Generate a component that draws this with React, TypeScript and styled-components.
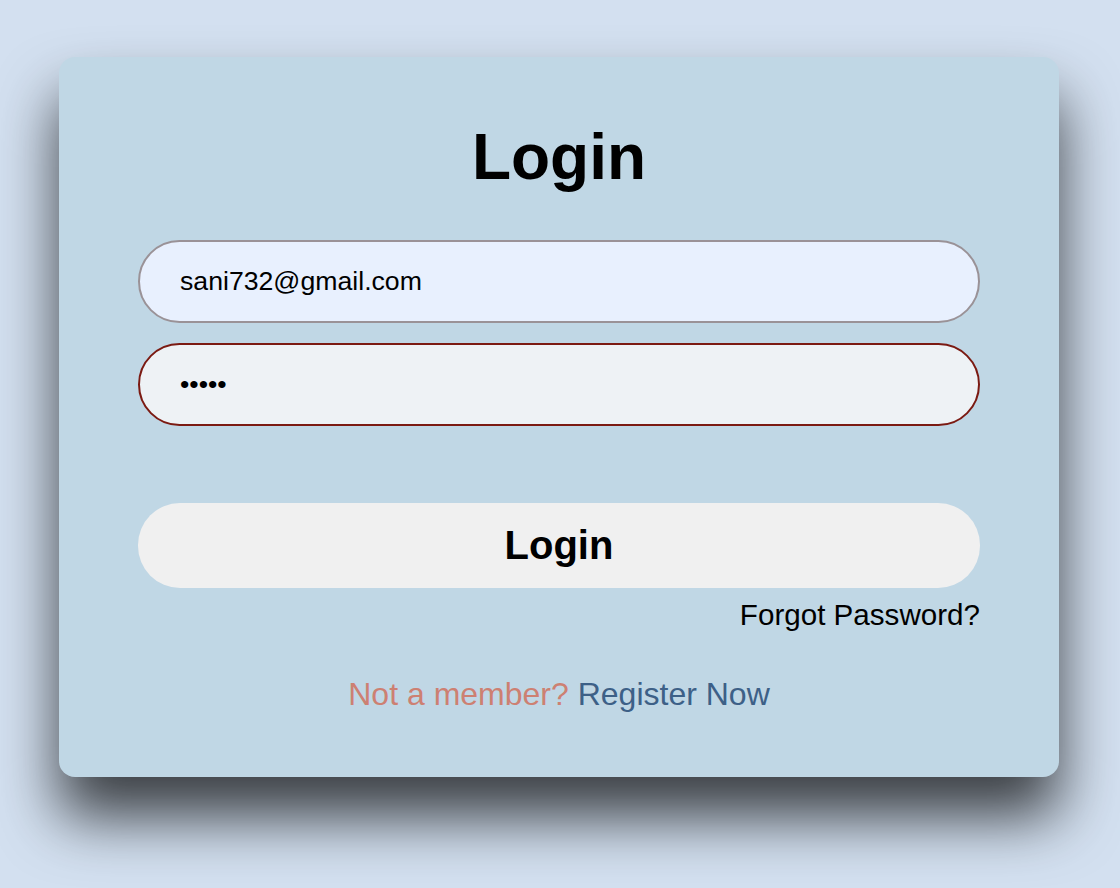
import React from "react";
import styled, { createGlobalStyle } from "styled-components";

const Global = createGlobalStyle`
  html, body { margin: 0; padding: 0; }
  body {
    background: #d3e0f0;
    font-family: "Liberation Sans", Arial, sans-serif;
    width: 1120px;
    height: 888px;
    overflow: hidden;
  }
`;

const Page = styled.div`
  display: flex;
  justify-content: flex-start;
  padding: 57px 0 0 59px;
`;

const Card = styled.form`
  width: 1000px;
  height: 720px;
  box-sizing: border-box;
  background: #c0d7e5;
  border-radius: 16px;
  box-shadow: 0 40px 60px rgba(0, 0, 0, 0.72);
  padding: 63px 79px 0;
  display: flex;
  flex-direction: column;
`;

const Title = styled.h1`
  margin: 0 0 46px;
  text-align: center;
  font-size: 64px;
  font-weight: 700;
  color: #000;
  line-height: normal;
`;

const Field = styled.input<{ $variant: "filled" | "error" }>`
  display: block;
  width: 100%;
  height: 83px;
  box-sizing: border-box;
  border-radius: 42px;
  border: 2px solid ${(p) => (p.$variant === "error" ? "#7b1a12" : "#9a9297")};
  background: ${(p) => (p.$variant === "error" ? "#eef2f5" : "#e8f0fe")};
  padding: 0 40px;
  font-family: "Liberation Sans", Arial, sans-serif;
  font-size: 26.67px;
  color: #000;
  outline: none;
  margin: 0;
`;

const Fields = styled.div`
  display: flex;
  flex-direction: column;
  gap: 20px;
`;

const Button = styled.button`
  margin-top: 77px;
  height: 85px;
  width: 100%;
  border: none;
  border-radius: 42px;
  background: #f0f0f0;
  font-family: "Liberation Sans", Arial, sans-serif;
  font-size: 40px;
  font-weight: 700;
  color: #000;
  cursor: pointer;
`;

const Forgot = styled.a`
  align-self: flex-end;
  margin-top: 10px;
  font-size: 29.6px;
  color: #000;
  text-decoration: none;
  line-height: normal;
`;

const Footer = styled.p`
  margin: 44px 0 0;
  text-align: center;
  font-size: 32px;
  line-height: normal;
`;

const Muted = styled.span`
  color: #cd8072;
`;

const Link = styled.a`
  color: #3d6087;
  text-decoration: none;
`;

export default function App() {
  return (
    <>
      <Global />
      <Page>
        <Card onSubmit={(e) => e.preventDefault()}>
          <Title>Login</Title>
          <Fields>
            <Field $variant="filled" type="email" defaultValue="sani732@gmail.com" />
            <Field $variant="error" type="password" defaultValue="12345" />
          </Fields>
          <Button type="submit">Login</Button>
          <Forgot href="#">Forgot Password?</Forgot>
          <Footer>
            <Muted>Not a member? </Muted>
            <Link href="#">Register Now</Link>
          </Footer>
        </Card>
      </Page>
    </>
  );
}
